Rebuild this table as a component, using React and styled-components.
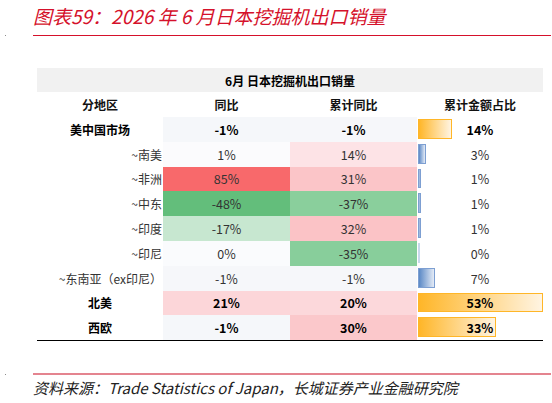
import React from 'react';
import styled, { createGlobalStyle } from 'styled-components';

const GlobalStyle = createGlobalStyle`
  html, body {
    margin: 0;
    padding: 0;
    background: #ffffff;
  }
  body {
    font-family: "Noto Sans CJK SC", "Noto Sans", sans-serif;
    color: #333;
  }
`;

const Page = styled.div`
  width: 552px;
  height: 403px;
  overflow: hidden;
`;

const Title = styled.h1`
  margin: 0;
  padding: 3px 0 0 33px;
  height: 29px;
  font-size: 19px;
  line-height: 26px;
  font-weight: 400;
  font-style: italic;
  color: #d5112b;
  white-space: nowrap;
`;

const RuleRow = styled.div`
  display: flex;
  align-items: center;
  padding-left: 5px;
  margin-top: ${p => p.$top}px;
`;

const Dot = styled.span`
  width: 1px;
  height: 1px;
  background: #8c8c8c;
`;

const Rule = styled.div`
  flex: 1;
  margin-left: 27px;
  margin-right: 1px;
  height: ${p => p.$thick}px;
  background: ${p => p.$color};
`;

const Table = styled.div`
  display: grid;
  grid-template-columns: 126px 127px 127px 126px;
  width: 506px;
  margin: 32px 0 0 37px;
  border-bottom: 1px solid #000;
  font-size: 12px;
`;

const Band = styled.div`
  grid-column: 1 / -1;
  height: 24px;
  display: flex;
  align-items: center;
  justify-content: center;
  background: #f1f1f1;
  font-weight: 700;
  color: #000;
  font-size: 12px;
`;

const HeadCell = styled.div`
  height: 25px;
  display: flex;
  align-items: center;
  justify-content: center;
  font-weight: 700;
  color: #111;
`;

const LabelCell = styled.div`
  height: 24.8px;
  display: flex;
  align-items: center;
  justify-content: ${p => (p.$bold ? 'center' : 'flex-end')};
  padding-right: ${p => (p.$bold ? 0 : 1)}px;
  font-weight: ${p => (p.$bold ? 700 : 400)};
  color: ${p => (p.$bold ? '#000' : '#333')};
  white-space: nowrap;
`;

const ValueCell = styled.div`
  height: 24.8px;
  display: flex;
  align-items: center;
  justify-content: center;
  background: ${p => p.$bg};
  font-size: 12.5px;
  font-weight: ${p => (p.$bold ? 700 : 400)};
  color: ${p => (p.$bold ? '#000' : '#333')};
`;

const BarCell = styled.div`
  height: 24.8px;
  display: grid;
  font-size: 12.5px;
  font-weight: ${p => (p.$bold ? 700 : 400)};
  color: ${p => (p.$bold ? '#000' : '#333')};
`;

const Bar = styled.div`
  grid-area: 1 / 1;
  justify-self: start;
  align-self: stretch;
  margin: 2px 0 3px 1px;
  box-sizing: border-box;
  background: ${p =>
    p.$tone === 'orange'
      ? 'linear-gradient(to right, #ffb628, #fff4e2)'
      : 'linear-gradient(to right, #5b89c6, #e4ebf6)'};
  border: 1px solid ${p => (p.$tone === 'orange' ? '#ffb628' : '#7d9fd2')};
`;

const BarValue = styled.span`
  grid-area: 1 / 1;
  align-self: center;
  justify-self: center;
`;

const Footer = styled.p`
  margin: 3px 0 0 33px;
  font-size: 15px;
  line-height: 20px;
  font-style: italic;
  color: #222;
  white-space: nowrap;
`;

const rows = [
  { label: '美中国市场', bold: true, yoy: '-1%', yoyBg: '#f5f7fa', cum: '-1%', cumBg: '#f6f7fa', share: 14 },
  { label: '~南美', yoy: '1%', yoyBg: '#fbfbfd', cum: '14%', cumBg: '#fde3e6', share: 3 },
  { label: '~非洲', yoy: '85%', yoyBg: '#f8696b', cum: '31%', cumBg: '#fbc5c8', share: 1 },
  { label: '~中东', yoy: '-48%', yoyBg: '#63be7b', cum: '-37%', cumBg: '#8acf9c', share: 1 },
  { label: '~印度', yoy: '-17%', yoyBg: '#c7e7d0', cum: '32%', cumBg: '#fbc3c6', share: 1 },
  { label: '~印尼', yoy: '0%', yoyBg: '#fafbfd', cum: '-35%', cumBg: '#88ce9b', share: 0 },
  { label: '~东南亚（ex印尼）', yoy: '-1%', yoyBg: '#f6f7fa', cum: '-1%', cumBg: '#f6f7fa', share: 7 },
  { label: '北美', bold: true, yoy: '21%', yoyBg: '#fcd6d9', cum: '20%', cumBg: '#fcd8db', share: 53 },
  { label: '西欧', bold: true, yoy: '-1%', yoyBg: '#f5f7fa', cum: '30%', cumBg: '#fbc8cb', share: 33 },
];

// data bar length in px, scaled so 53% fills the column
const barWidth = pct => Math.max(1, Math.round(1 + pct * 2.34));

const App = () => {
  return (
    <Page>
      <GlobalStyle />
      <Title>图表59：2026 年 6 月日本挖掘机出口销量</Title>
      <RuleRow $top={3}>
        <Dot />
        <Rule $thick={1} $color="#d5112b" />
      </RuleRow>

      <Table>
        <Band>6月 日本挖掘机出口销量</Band>
        <HeadCell>分地区</HeadCell>
        <HeadCell>同比</HeadCell>
        <HeadCell>累计同比</HeadCell>
        <HeadCell>累计金额占比</HeadCell>
        {rows.map(r => (
          <React.Fragment key={r.label}>
            <LabelCell $bold={r.bold}>{r.label}</LabelCell>
            <ValueCell $bold={r.bold} $bg={r.yoyBg}>{r.yoy}</ValueCell>
            <ValueCell $bold={r.bold} $bg={r.cumBg}>{r.cum}</ValueCell>
            <BarCell $bold={r.bold}>
              <Bar
                $tone={r.bold ? 'orange' : 'blue'}
                style={{ width: barWidth(r.share), opacity: r.share === 0 ? 0.4 : 1 }}
              />
              <BarValue>{r.share}%</BarValue>
            </BarCell>
          </React.Fragment>
        ))}
      </Table>

      <RuleRow $top={32}>
        <Dot />
        <Rule $thick={2} $color="#e4848f" />
      </RuleRow>
      <Footer>资料来源：Trade Statistics of Japan，长城证券产业金融研究院</Footer>
    </Page>
  );
};

export default App;
